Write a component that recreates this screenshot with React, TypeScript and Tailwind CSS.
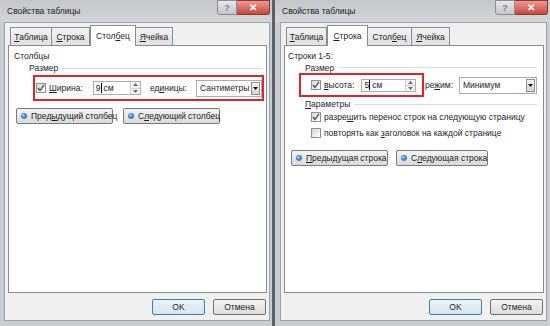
import React from "react";

const U = ({ children }: { children: React.ReactNode }) => (
  <span className="underline decoration-[0.5px] underline-offset-[1px]">{children}</span>
);

function Check({ checked }: { checked?: boolean }) {
  return (
    <span className="flex h-[10px] w-[10px] shrink-0 items-center justify-center border border-[#8e8f8f] bg-gradient-to-br from-[#d8d8d8] to-white">
      {checked && (
        <svg width="8" height="8" viewBox="0 0 8 8">
          <path d="M1 4 L3 6.5 L7 0.8" fill="none" stroke="#3d4d5c" strokeWidth="1.3" />
        </svg>
      )}
    </span>
  );
}

function Spin() {
  return (
    <div className="flex h-full w-[10px] flex-col border-l border-[#d0d0d0]">
      <div className="flex flex-1 items-center justify-center border-b border-[#d0d0d0] bg-[#f4f4f4]">
        <svg width="5" height="3" viewBox="0 0 5 3"><path d="M0 3 L2.5 0 L5 3Z" fill="#6a6a6a" /></svg>
      </div>
      <div className="flex flex-1 items-center justify-center bg-[#f4f4f4]">
        <svg width="5" height="3" viewBox="0 0 5 3"><path d="M0 0 L2.5 3 L5 0Z" fill="#6a6a6a" /></svg>
      </div>
    </div>
  );
}

function Select({ text, w }: { text: string; w: string }) {
  return (
    <div className={`flex h-[17px] items-center border border-[#a5acb5] bg-white pl-[3px] ${w}`}>
      <span className="flex-1">{text}</span>
      <div className="mr-[1px] flex h-[13px] w-[9px] items-center justify-center border border-[#8f8f8f] bg-gradient-to-b from-[#f2f2f2] to-[#d6d6d6]">
        <svg width="5" height="3" viewBox="0 0 5 3"><path d="M0 0 L2.5 3 L5 0Z" fill="#111" /></svg>
      </div>
    </div>
  );
}

function NavButton({ label, w }: { label: React.ReactNode; w: string }) {
  return (
    <div className={`flex h-[16px] items-center rounded-[2px] border border-[#7a7a7a] bg-gradient-to-b from-[#f4f4f4] to-[#dadada] pl-[4px] ${w}`}>
      <svg width="6" height="6" viewBox="0 0 6 6" className="mr-[4px] shrink-0">
        <circle cx="3" cy="3" r="3" fill="#3f85cf" />
        <circle cx="2.3" cy="2.2" r="1.2" fill="#a9d1f5" />
      </svg>
      <span>{label}</span>
    </div>
  );
}

function Btn({ label, def }: { label: string; def?: boolean }) {
  return (
    <div
      className={`flex h-[16px] w-[53px] items-center justify-center rounded-[2px] border bg-gradient-to-b ${
        def ? "border-[#3c7fb1] from-[#eaf3f9] to-[#d4e5f1]" : "border-[#707070] from-[#f4f4f4] to-[#dcdcdc]"
      }`}
    >
      {label}
    </div>
  );
}

function TitleBar() {
  return (
    <div className="flex h-[22px] items-start bg-gradient-to-b from-[#c3c6ca] to-[#d3d6d9]">
      <span className="ml-[7px] mt-[6px] leading-[11px] text-[#1e1e1e]">Свойства таблицы</span>
      <div className="ml-auto mr-[2px] flex">
        <div className="flex h-[15px] w-[20px] items-center justify-center rounded-bl-[3px] border border-[#8a8d92] bg-gradient-to-b from-[#e6e8ea] to-[#c4c7cb] text-[9px] font-bold text-[#7b8088]">
          ?
        </div>
        <div className="flex h-[15px] w-[33px] items-center justify-center rounded-br-[3px] border border-l-0 border-[#8a3a36] bg-gradient-to-b from-[#e89a90] to-[#c8463c] text-[10px] font-bold text-white">
          ✕
        </div>
      </div>
    </div>
  );
}

function Tabs({ tabs, active }: { tabs: { label: React.ReactNode; w: string }[]; active: number }) {
  return (
    <div className="flex h-[21px] items-end pl-[2px]">
      {tabs.map((t, i) =>
        i === active ? (
          <div
            key={i}
            className={`-mb-px z-10 flex h-[21px] items-center justify-center border border-b-0 border-[#898c95] bg-white ${t.w}`}
          >
            {t.label}
          </div>
        ) : (
          <div
            key={i}
            className={`flex h-[18px] items-center justify-center border border-b-0 border-[#898c95] bg-gradient-to-b from-[#f2f2f2] to-[#e1e1e1] ${t.w} ${
              i > 0 ? "-ml-px" : ""
            }`}
          >
            {t.label}
          </div>
        )
      )}
    </div>
  );
}

function Window({
  w,
  frame,
  tabs,
  active,
  children,
}: {
  w: string;
  frame: string;
  tabs: { label: React.ReactNode; w: string }[];
  active: number;
  children: React.ReactNode;
}) {
  return (
    <div className={`flex h-[326px] flex-col bg-[#c9ccd0] ${w}`}>
      <TitleBar />
      <div className={`flex flex-1 flex-col ${frame}`}>
        <div className="flex flex-1 flex-col border border-[#9da2a8] bg-[#f0f0f0] pl-[3px] pr-[2px] pt-[1px]">
          <Tabs tabs={tabs} active={active} />
          <div className="flex-1 border border-[#898c95] bg-white">{children}</div>
          <div className="flex h-[27px] items-center justify-end gap-[8px] pr-[1px]">
            <Btn label="OK" def />
            <Btn label="Отмена" />
          </div>
        </div>
        <div className="h-[5px]" />
      </div>
    </div>
  );
}

export default function App() {
  return (
    <div className="flex h-[326px] w-[550px] gap-[3px] overflow-hidden whitespace-nowrap bg-[#5d6166] font-['Liberation_Sans',Arial,sans-serif] text-[8.5px] leading-[12px] text-[#1e1e1e]">
      <Window
        w="w-[272px]"
        frame="pl-[4px] pr-[2px]"
        active={2}
        tabs={[
          { label: <><U>Т</U>аблица</>, w: "w-[42px]" },
          { label: <><U>С</U>трока</>, w: "w-[39px]" },
          { label: <>Стол<U>б</U>ец</>, w: "w-[46px]" },
          { label: <><U>Я</U>чейка</>, w: "w-[38px]" },
        ]}
      >
        <div className="flex flex-col pl-[5px] pt-[4px]">
          <div>Столбцы</div>
          <div className="ml-[15px] flex items-center pr-[3px]">
            <span>Размер</span>
            <div className="ml-[4px] h-px flex-1 bg-[#d8dde2]" />
          </div>
          <div className="ml-[19px] mt-[1px] flex h-[26px] w-[231px] items-center border-2 border-[#e1232b] pl-[1px]">
            <Check checked />
            <span className="ml-[3px]"><U>Ш</U>ирина:</span>
            <div className="ml-[10px] flex h-[14px] w-[54px] items-center border border-[#abadb3] bg-white">
              <span className="flex-1 pl-[2px]">9<span className="mr-[2px] border-l border-black" />см</span>
              <Spin />
            </div>
            <span className="ml-[9px]">ед<U>и</U>ницы:</span>
            <div className="ml-[9px]">
              <Select text="Сантиметры" w="w-[66px]" />
            </div>
          </div>
          <div className="mt-[7px] flex gap-[10px] pl-[2px]">
            <NavButton label={<>Пре<U>ды</U>дущий столбец</>} w="w-[97px]" />
            <NavButton label={<>С<U>л</U>едующий столбец</>} w="w-[97px]" />
          </div>
        </div>
      </Window>
      <Window
        w="w-[275px]"
        frame="pl-[5px] pr-[3px]"
        active={1}
        tabs={[
          { label: <><U>Т</U>аблица</>, w: "w-[41px]" },
          { label: <><U>С</U>трока</>, w: "w-[41px]" },
          { label: <>Стол<U>б</U>ец</>, w: "w-[45px]" },
          { label: <><U>Я</U>чейка</>, w: "w-[39px]" },
        ]}
      >
        <div className="flex flex-col pl-[3px] pt-[4px]">
          <div>Строки 1-5:</div>
          <div className="ml-[17px] flex h-[11px] items-center pr-[6px]">
            <span>Размер</span>
            <div className="ml-[4px] h-px flex-1 bg-[#d8dde2]" />
          </div>
          <div className="flex items-center">
            <div className="ml-[11px] flex h-[24px] w-[125px] items-center border-2 border-[#e1232b] pl-[10px]">
              <Check checked />
              <span className="ml-[3px]"><U>в</U>ысота:</span>
              <div className="ml-[7px] flex h-[13px] w-[55px] items-center border border-[#abadb3] bg-white">
                <span className="flex-1 pl-[2px]">5<span className="mr-[2px] border-l border-black" />см</span>
                <Spin />
              </div>
            </div>
            <span className="ml-[1px]">ре<U>ж</U>им:</span>
            <div className="ml-[6px]">
              <Select text="Минимум" w="w-[78px]" />
            </div>
          </div>
          <div className="ml-[17px] mt-[2px] flex h-[10px] items-center pr-[6px]">
            <span><U>П</U>араметры</span>
            <div className="ml-[4px] h-px flex-1 bg-[#d8dde2]" />
          </div>
          <div className="ml-[23px] flex h-[16px] items-center gap-[3px]">
            <Check checked />
            <span>разре<U>ш</U>ить перенос строк на следующую страницу</span>
          </div>
          <div className="ml-[23px] flex h-[16px] items-center gap-[3px]">
            <Check />
            <span>повторять как <U>з</U>аголовок на каждой странице</span>
          </div>
          <div className="mt-[9px] flex gap-[8px] pl-[3px]">
            <NavButton label={<><U>П</U>редыдущая строка</>} w="w-[97px]" />
            <NavButton label={<>С<U>л</U>едующая строка</>} w="w-[92px]" />
          </div>
        </div>
      </Window>
    </div>
  );
}
